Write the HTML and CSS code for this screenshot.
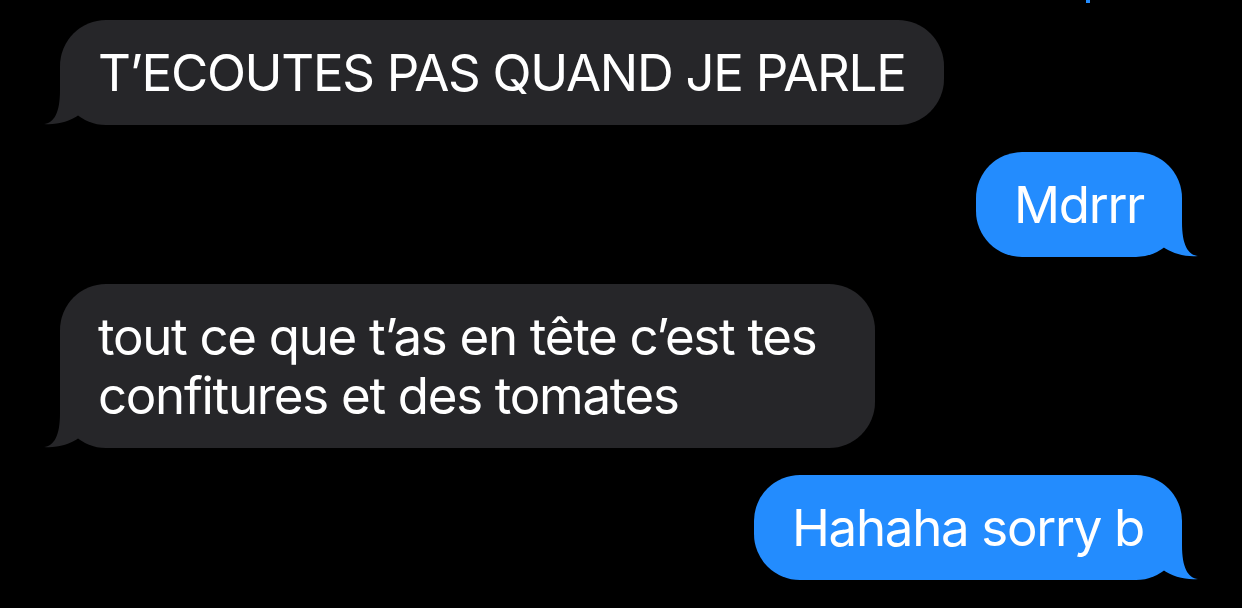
FILE: index.html
```html
<!DOCTYPE html>
<html lang="fr">
<head>
  <meta charset="UTF-8">
  <title>Messages</title>
  <meta name="viewport" content="width=device-width, initial-scale=1.0">
  <link rel="stylesheet" href="styles.css">
</head>
<body>

<div class="thread">
  <!-- bottom edge of the previous bubble, cut off by the screenshot -->
  <span class="edge-dot"></span>

  <div class="msg them">
    T’ECOUTES PAS QUAND JE PARLE
    <svg class="tail" viewBox="0 0 40 50"><path d="M16 0 L16 15 C16 38 10 48 0 49 C12 50 26 47 36 39 L36 0 Z"/></svg>
  </div>

  <div class="msg me">
    Mdrrr
    <svg class="tail" viewBox="0 0 40 50"><path d="M16 0 L16 15 C16 38 10 48 0 49 C12 50 26 47 36 39 L36 0 Z"/></svg>
  </div>

  <div class="msg them wide">
    tout ce que t’as en tête c’est tes<br>confitures et des tomates
    <svg class="tail" viewBox="0 0 40 50"><path d="M16 0 L16 15 C16 38 10 48 0 49 C12 50 26 47 36 39 L36 0 Z"/></svg>
  </div>

  <div class="msg me">
    Hahaha sorry b
    <svg class="tail" viewBox="0 0 40 50"><path d="M16 0 L16 15 C16 38 10 48 0 49 C12 50 26 47 36 39 L36 0 Z"/></svg>
  </div>
</div>

</body>
</html>
```

FILE: styles.css
```css
body {
  margin: 0;
  background-color: #000;
  font-family: Inter, "Noto Sans", Arial, sans-serif;
  overflow: hidden;
}

.thread {
  position: relative;
  display: flex;
  flex-direction: column;
  gap: 27px;
  padding: 20px 60px 0 60px;
  height: 588px;
}

.edge-dot {
  position: absolute;
  top: 0;
  right: 152px;
  width: 4px;
  height: 3px;
  background-color: #238cfe;
}

.msg {
  position: relative;
  max-width: 900px;
  box-sizing: border-box;
  padding: 23px 38px;
  border-radius: 46px;
  font-size: 51px;
  line-height: 59px;
  letter-spacing: -1.3px;
  color: #fff;
}

.msg.wide {
  width: 815px;
}

.msg .tail {
  position: absolute;
  bottom: 0;
  width: 40px;
  height: 50px;
}

.them {
  align-self: flex-start;
  background-color: #262629;
}

.them .tail {
  left: -16px;
  fill: #262629;
}

.me {
  align-self: flex-end;
  background-color: #238cfe;
}

.me .tail {
  right: -16px;
  transform: scaleX(-1);
  fill: #238cfe;
}
```
